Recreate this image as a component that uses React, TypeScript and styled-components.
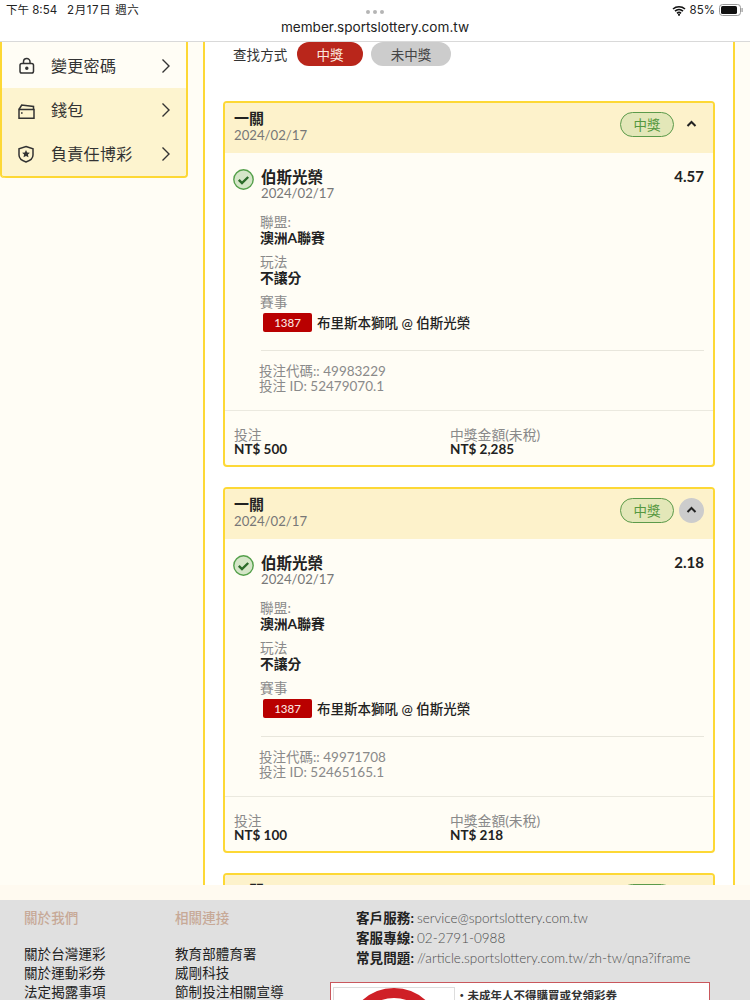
import styled, { createGlobalStyle } from "styled-components";

const GlobalStyle = createGlobalStyle`
  html, body {
    margin: 0;
    padding: 0;
    background: #fffdf5;
    font-family: Lato, "Noto Sans CJK TC", sans-serif;
  }
  * { box-sizing: border-box; }
`;

const Page = styled.div`
  width: 750px;
  height: 1000px;
  overflow: hidden;
  display: flex;
  flex-direction: column;
`;

/* ---- safari top bar ---- */
const TopBar = styled.header`
  height: 42px;
  flex: none;
  background: #fff;
  border-bottom: 1px solid #d9d9d9;
  display: flex;
  flex-direction: column;
  align-items: center;
  position: relative;
  font-family: Inter, "Noto Sans CJK TC", sans-serif;
  color: #222;
`;
const StatusLeft = styled.div`
  position: absolute;
  left: 6px;
  top: 2px;
  font-size: 11.5px;
  line-height: 16px;
  display: flex;
  gap: 10px;
`;
const StatusDate = styled.span`
  letter-spacing: 0.6px;
`;
const StatusRight = styled.div`
  position: absolute;
  right: 7px;
  top: 2px;
  display: flex;
  align-items: center;
  gap: 4px;
  font-size: 11.5px;
  line-height: 16px;
`;
const Dots = styled.div`
  display: flex;
  gap: 3px;
  margin-top: 10px;
  height: 4px;
`;
const Dot = styled.span`
  width: 4px;
  height: 4px;
  border-radius: 50%;
  background: #b5b5b5;
`;
const Url = styled.div`
  font-size: 13.6px;
  line-height: 18px;
  margin-top: 4px;
`;

/* ---- main ---- */
const Main = styled.main`
  height: 843px;
  flex: none;
  display: flex;
  overflow: hidden;
  background: #fffdf5;
`;
const SideMenu = styled.nav`
  width: 186px;
  height: 136px;
  flex: none;
  border: 2px solid #fdd835;
  border-top: none;
  border-left: none;
  border-radius: 0 0 4px 4px;
  box-shadow: -2px 0 0 #fdd835;
  margin-left: 2px;
  margin-right: 15px;
  overflow: hidden;
  padding-top: 2px;
`;
const MenuItem = styled.div<{ $active?: boolean }>`
  height: 44px;
  display: flex;
  align-items: center;
  padding: 0 12px 0 16px;
  background: ${(p) => (p.$active ? "#fdf4cf" : "#fffdf5")};
  font-size: 16px;
  color: #333;
  font-family: "Noto Sans CJK TC", sans-serif;
`;
const MenuIcon = styled.span`
  width: 18px;
  height: 18px;
  display: flex;
  margin-right: 15px;
`;
const MenuLabel = styled.span`
  flex: 1;
  letter-spacing: 0.3px;
  padding-bottom: 2px;
`;

const Panel = styled.section`
  width: 532px;
  flex: none;
  background: #fff;
  border-left: 2px solid #fdd835;
  border-right: 2px solid #fdd835;
  padding: 0 18px;
`;
const FilterRow = styled.div`
  height: 24px;
  display: flex;
  align-items: center;
  margin-bottom: 35px;
  padding-left: 10px;
  font-size: 13.5px;
  color: #333;
  font-family: "Noto Sans CJK TC", sans-serif;
`;
const FilterLabel = styled.span`
  width: 64px;
  letter-spacing: 0.1px;
`;
const FilterPill = styled.span<{ $on?: boolean }>`
  width: ${(p) => (p.$on ? "66px" : "80px")};
  height: 24px;
  border-radius: 12px;
  margin-right: 8px;
  display: flex;
  align-items: center;
  justify-content: center;
  font-size: 13.5px;
  background: ${(p) => (p.$on ? "#b9261b" : "#cccccc")};
  color: ${(p) => (p.$on ? "#fbe9df" : "#444")};
`;

const Card = styled.article`
  border: 2px solid #fdd835;
  border-radius: 4px;
  background: #fffdf5;
  margin-bottom: 20px;
  overflow: hidden;
  height: 366px;
`;
const CardHead = styled.div`
  height: 50px;
  background: #fdf2cb;
  display: flex;
  align-items: center;
  padding: 0 9px;
`;
const HeadText = styled.div`
  flex: 1;
  margin-bottom: 4px;
`;
const HeadTitle = styled.div`
  font-size: 15px;
  line-height: 18px;
  font-weight: 700;
  color: #222;
  font-family: "Noto Sans CJK TC", sans-serif;
`;
const DateText = styled.div`
  font-size: 13.2px;
  line-height: 15px;
  padding-top: 1px;
  font-weight: 400;
  color: #777;
  font-family: Lato, sans-serif;
`;
const WinBadge = styled.span`
  width: 54px;
  height: 25px;
  border: 1.5px solid #5c9a4a;
  border-radius: 13px;
  background: #e3e7b8;
  color: #55983f;
  font-size: 13.5px;
  display: flex;
  align-items: center;
  justify-content: center;
  margin-right: 5px;
  margin-top: -8px;
  font-family: "Noto Sans CJK TC", sans-serif;
`;
const Toggle = styled.span<{ $hover?: boolean }>`
  width: 25px;
  height: 25px;
  border-radius: 50%;
  background: ${(p) => (p.$hover ? "#cccccc" : "transparent")};
  display: flex;
  align-items: center;
  justify-content: center;
  margin-top: -8px;
`;

const CardBody = styled.div`
  height: 257px;
  padding: 14px 9px 0 9px;
`;
const BetTop = styled.div`
  display: flex;
  align-items: flex-start;
`;
const CheckWrap = styled.span`
  width: 21px;
  height: 21px;
  margin: 1.5px 7px 0 -1px;
  flex: none;
  display: flex;
`;
const BetName = styled.div`
  flex: 1;
  font-size: 15.5px;
  line-height: 18px;
  font-weight: 700;
  color: #222;
  font-family: "Noto Sans CJK TC", sans-serif;
`;
const Odds = styled.div`
  font-size: 15px;
  line-height: 18px;
  font-weight: 700;
  color: #222;
`;
const BetDetail = styled.div`
  padding-left: 26px;
`;
const FieldLabel = styled.div<{ $gap?: number }>`
  font-size: 13.7px;
  line-height: 15px;
  color: #8a8a8a;
  margin-top: ${(p) => p.$gap ?? 8}px;
`;
const FieldValue = styled.div`
  font-size: 13.8px;
  line-height: 17px;
  font-weight: 700;
  color: #222;
`;
const MatchRow = styled.div`
  display: flex;
  align-items: center;
  margin-top: 3px;
  font-size: 13.5px;
  font-weight: 500;
  color: #222;
`;
const MatchCode = styled.span`
  width: 49px;
  height: 19px;
  margin: 0 5px 0 3px;
  background: #b90000;
  border-radius: 2px;
  color: #fbe6e0;
  font-size: 11.5px;
  font-weight: 500;
  display: flex;
  align-items: center;
  justify-content: center;
`;
const Divider = styled.div`
  border-top: 1px solid #e8e6dc;
  margin: 18px 0 13px 27px;
`;
const Codes = styled.div`
  padding-left: 25px;
  font-size: 13.5px;
  line-height: 15px;
  color: #8a8a8a;
`;
const CardFoot = styled.div`
  height: 55px;
  border-top: 1px solid #ebe9df;
  display: flex;
  padding: 16px 9px 0 9px;
`;
const FootCell = styled.div`
  width: 216px;
`;
const FootLabel = styled.div`
  font-size: 13.8px;
  line-height: 15px;
  color: #8a8a8a;
`;
const FootValue = styled.div`
  font-size: 13.5px;
  line-height: 15px;
  font-weight: 700;
  color: #222;
`;

/* ---- footer ---- */
const Strip = styled.div`
  height: 15px;
  flex: none;
  background: #fffaf0;
`;
const Footer = styled.footer`
  flex: 1;
  background: #e0e0e0;
  display: flex;
  padding: 9px 0 0 24px;
  overflow: hidden;
`;
const LinkCol = styled.div`
  width: 151px;
  flex: none;
`;
const LinkTitle = styled.div`
  font-size: 13.5px;
  line-height: 18px;
  color: #c7a997;
  font-weight: 500;
  margin-bottom: 18px;
  letter-spacing: 0.1px;
`;
const LinkItem = styled.div`
  font-size: 13.5px;
  line-height: 19px;
  color: #222;
  letter-spacing: 0.1px;
`;
const ContactCol = styled.div`
  margin: -1px 0 0 30px;
  width: 380px;
  flex: none;
`;
const ContactLine = styled.div`
  line-height: 20px;
  white-space: nowrap;
  display: flex;
  align-items: baseline;
`;
const ContactKey = styled.b`
  color: #222;
  font-size: 13.5px;
  font-weight: 700;
  letter-spacing: 0.1px;
  margin-right: 3px;
`;
const ContactValue = styled.span`
  color: #4d4d4d;
  font-size: 13.5px;
  font-weight: 300;
`;
const WarnBox = styled.div`
  width: 380px;
  height: 60px;
  margin: 14px 0 0 -26px;
  border: 1px solid #c9575c;
  background: #fff;
  padding: 4px 2px;
  display: flex;
`;
const WarnSign = styled.div`
  width: 122px;
  height: 100px;
  flex: none;
  border: 1px solid #ddd;
  display: flex;
  justify-content: center;
`;
const WarnText = styled.div`
  font-size: 11.5px;
  font-weight: 700;
  color: #333;
  line-height: 16px;
  margin-left: 1px;
  padding-top: 1px;
`;

const Chevron = styled.svg`
  width: 16px;
  height: 16px;
  fill: none;
  stroke: #333;
  stroke-width: 1.4;
`;
const UpChevron = styled.svg`
  width: 11px;
  height: 8px;
  fill: none;
  stroke: #222;
  stroke-width: 2;
`;
const LineIcon = styled.svg`
  width: 18px;
  height: 18px;
  fill: none;
  stroke: #333;
  stroke-width: 1.5;
`;

const menu = [
  {
    label: "變更密碼",
    active: false,
    icon: (
      <LineIcon viewBox="0 0 18 18">
        <rect x="2" y="6.5" width="13.5" height="9.5" rx="1.8" />
        <path d="M5.5 6.5V4.8a3.25 3.25 0 0 1 6.5 0v1.7" />
        <circle cx="8.8" cy="11.2" r="1" fill="#333" />
      </LineIcon>
    ),
  },
  {
    label: "錢包",
    active: true,
    icon: (
      <LineIcon viewBox="0 0 18 18">
        <path d="M1 8.5h15v8.8H1z" />
        <path d="M1 8.5L3.7 4l11.8 1.5v3" />
        <path d="M3 12h1.6" />
      </LineIcon>
    ),
  },
  {
    label: "負責任博彩",
    active: true,
    icon: (
      <LineIcon viewBox="0 0 18 18">
        <path d="M8 1.5l7 2.3V10c0 3.6-3.2 5.8-7 7-3.8-1.2-7-3.4-7-7V3.8z" />
        <path d="M8 5l1.2 2.5 2.7.3-2 1.8.6 2.7L8 11l-2.500 1.300.6-2.700-2-1.800 2.700-.3z" fill="#333" stroke="none" />
      </LineIcon>
    ),
  },
];

const bets = [
  { odds: "4.57", code: "49983229", id: "52479070.1", stake: "NT$ 500", win: "NT$ 2,285", hover: false },
  { odds: "2.18", code: "49971708", id: "52465165.1", stake: "NT$ 100", win: "NT$ 218", hover: true },
];

function CheckIcon() {
  return (
    <svg width="21" height="21" viewBox="0 0 21 21">
      <circle cx="10.5" cy="10.5" r="9.7" fill="#d5e6c8" stroke="#55a04b" strokeWidth="1.4" />
      <path d="M5.8 10.8l3.2 3.2 6.2-6" fill="none" stroke="#2c6b2a" strokeWidth="2.4" />
    </svg>
  );
}

function BetCard({ bet }: { bet: (typeof bets)[number] }) {
  return (
    <Card>
      <CardHead>
        <HeadText>
          <HeadTitle>一關</HeadTitle>
          <DateText>2024/02/17</DateText>
        </HeadText>
        <WinBadge>中獎</WinBadge>
        <Toggle $hover={bet.hover}>
          <UpChevron viewBox="0 0 11 8">
            <path d="M1.5 6l4-4 4 4" />
          </UpChevron>
        </Toggle>
      </CardHead>
      <CardBody>
        <BetTop>
          <CheckWrap>
            <CheckIcon />
          </CheckWrap>
          <BetName>
            伯斯光榮
            <DateText>2024/02/17</DateText>
          </BetName>
          <Odds>{bet.odds}</Odds>
        </BetTop>
        <BetDetail>
          <FieldLabel $gap={13}>聯盟:</FieldLabel>
          <FieldValue>澳洲A聯賽</FieldValue>
          <FieldLabel>玩法</FieldLabel>
          <FieldValue>不讓分</FieldValue>
          <FieldLabel>賽事</FieldLabel>
          <MatchRow>
            <MatchCode>1387</MatchCode>
            布里斯本獅吼 @ 伯斯光榮
          </MatchRow>
        </BetDetail>
        <Divider />
        <Codes>
          投注代碼:: {bet.code}
          <br />
          投注 ID: {bet.id}
        </Codes>
      </CardBody>
      <CardFoot>
        <FootCell>
          <FootLabel>投注</FootLabel>
          <FootValue>{bet.stake}</FootValue>
        </FootCell>
        <FootCell>
          <FootLabel>中獎金額(未稅)</FootLabel>
          <FootValue>{bet.win}</FootValue>
        </FootCell>
      </CardFoot>
    </Card>
  );
}

function App() {
  return (
    <Page>
      <GlobalStyle />
      <TopBar>
        <StatusLeft>
          <span>下午 8:54</span>
          <StatusDate>2月17日 週六</StatusDate>
        </StatusLeft>
        <Dots>
          <Dot />
          <Dot />
          <Dot />
        </Dots>
        <Url>member.sportslottery.com.tw</Url>
        <StatusRight>
          <svg width="14" height="11" viewBox="0 0 14 11">
            <path d="M1 4a9 9 0 0 1 12 0M3 6.2a6 6 0 0 1 8 0M5 8.3a3 3 0 0 1 4 0" fill="none" stroke="#111" strokeWidth="1.6" />
            <circle cx="7" cy="9.8" r="1.1" fill="#111" />
          </svg>
          85%
          <svg width="24" height="12" viewBox="0 0 24 12">
            <rect x="0.5" y="0.5" width="21" height="11" rx="3" fill="none" stroke="#999" />
            <rect x="2" y="2" width="16" height="8" rx="1.6" fill="#111" />
            <rect x="22.5" y="4" width="1.2" height="4" fill="#999" />
          </svg>
        </StatusRight>
      </TopBar>
      <Main>
        <SideMenu>
          {menu.map((m) => (
            <MenuItem key={m.label} $active={m.active}>
              <MenuIcon>{m.icon}</MenuIcon>
              <MenuLabel>{m.label}</MenuLabel>
              <Chevron viewBox="0 0 16 16">
                <path d="M4.5 1.5L11 8l-6.5 6.5" />
              </Chevron>
            </MenuItem>
          ))}
        </SideMenu>
        <Panel>
          <FilterRow>
            <FilterLabel>查找方式</FilterLabel>
            <FilterPill $on>中獎</FilterPill>
            <FilterPill>未中獎</FilterPill>
          </FilterRow>
          {bets.map((b) => (
            <BetCard key={b.code} bet={b} />
          ))}
          <Card>
            <CardHead>
              <HeadText>
                <HeadTitle>一關</HeadTitle>
                <DateText>2024/02/17</DateText>
              </HeadText>
              <WinBadge>中獎</WinBadge>
              <Toggle />
            </CardHead>
          </Card>
        </Panel>
      </Main>
      <Strip />
      <Footer>
        <LinkCol>
          <LinkTitle>關於我們</LinkTitle>
          <LinkItem>關於台灣運彩</LinkItem>
          <LinkItem>關於運動彩券</LinkItem>
          <LinkItem>法定揭露事項</LinkItem>
        </LinkCol>
        <LinkCol>
          <LinkTitle>相關連接</LinkTitle>
          <LinkItem>教育部體育署</LinkItem>
          <LinkItem>威剛科技</LinkItem>
          <LinkItem>節制投注相關宣導</LinkItem>
        </LinkCol>
        <ContactCol>
          <ContactLine>
            <ContactKey>客戶服務:</ContactKey>
            <ContactValue>service@sportslottery.com.tw</ContactValue>
          </ContactLine>
          <ContactLine>
            <ContactKey>客服專線:</ContactKey>
            <ContactValue>02-2791-0988</ContactValue>
          </ContactLine>
          <ContactLine>
            <ContactKey>常見問題:</ContactKey>
            <ContactValue>//article.sportslottery.com.tw/zh-tw/qna?iframe</ContactValue>
          </ContactLine>
          <WarnBox>
            <WarnSign>
              <svg width="94" height="94" viewBox="0 0 94 94">
                <circle cx="47" cy="47" r="42" fill="none" stroke="#cf2027" strokeWidth="10" />
              </svg>
            </WarnSign>
            <WarnText>・未成年人不得購買或兌領彩券</WarnText>
          </WarnBox>
        </ContactCol>
      </Footer>
    </Page>
  );
}

export default App;
